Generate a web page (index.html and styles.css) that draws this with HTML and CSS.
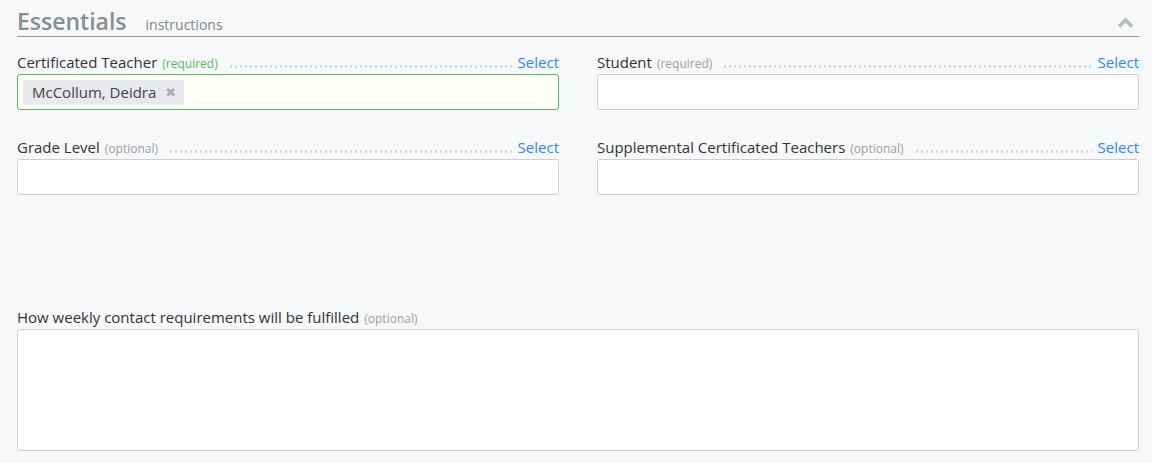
FILE: index.html
```html
<!DOCTYPE html>
<html>
<head>
<meta charset="utf-8">
<link rel="stylesheet" href="styles.css">
</head>
<body>
<section class="panel">
  <header class="panel-head">
    <h2 class="title">Essentials</h2>
    <span class="instructions">instructions</span>
    <svg class="chevron" width="17" height="11" viewBox="0 0 17 11"><path d="M2 9.5 L8.5 3 L15 9.5" fill="none" stroke="#b5bcbf" stroke-width="3.6"/></svg>
  </header>
  <div class="grid">
    <div class="field">
      <div class="label-row">
        <span class="label">Certificated Teacher</span><span class="hint req">(required)</span>
        <span class="leader"></span>
        <a class="select">Select</a>
      </div>
      <div class="box filled">
        <span class="token">McCollum, Deidra<span class="x">✖</span></span>
      </div>
    </div>
    <div class="field">
      <div class="label-row">
        <span class="label">Student</span><span class="hint">(required)</span>
        <span class="leader"></span>
        <a class="select">Select</a>
      </div>
      <div class="box"></div>
    </div>
    <div class="field">
      <div class="label-row">
        <span class="label">Grade Level</span><span class="hint">(optional)</span>
        <span class="leader"></span>
        <a class="select">Select</a>
      </div>
      <div class="box"></div>
    </div>
    <div class="field">
      <div class="label-row">
        <span class="label">Supplemental Certificated Teachers</span><span class="hint">(optional)</span>
        <span class="leader"></span>
        <a class="select">Select</a>
      </div>
      <div class="box"></div>
    </div>
  </div>
  <div class="field wide">
    <div class="label-row">
      <span class="label">How weekly contact requirements will be fulfilled</span><span class="hint">(optional)</span>
    </div>
    <div class="area"></div>
  </div>
</section>
</body>
</html>
```
FILE: styles.css
```css
html, body { margin: 0; padding: 0; background: #f7f8fa; }
body { font-family: "Open Sans", "DejaVu Sans", sans-serif; color: #333; }
.panel { padding: 6px 13px 0 17px; }
.panel-head {
  display: flex; align-items: baseline;
  border-bottom: 1px solid #8d9799;
  height: 31px; box-sizing: border-box;
  position: relative;
}
.title { margin: 0; font-size: 23px; font-weight: 600; color: #858f92; line-height: 30px; }
.instructions { margin-left: 19px; font-size: 14px; color: #7d8689; }
.chevron { position: absolute; right: 5px; top: 11px; }
.grid {
  display: grid; grid-template-columns: 1fr 1fr; column-gap: 38px; row-gap: 26px;
  margin-top: 14px;
}
.label-row { display: flex; align-items: baseline; height: 22px; margin-bottom: 1px; }
.label { font-size: 15px; color: #333; line-height: 22px; }
.hint { font-size: 12px; color: #9aa0a4; margin-left: 5px; }
.hint.req { color: #5cb85c; }
.leader {
  flex: 1; margin: 0 6px 0 12px; height: 3px;
  background-image: linear-gradient(90deg, #d6d9dc 0 2.5px, transparent 2.5px);
  background-size: 5px 3px; background-repeat: repeat-x;
  align-self: center; transform: translateY(4px);
}
.select { font-size: 15px; color: #2f86f6; cursor: pointer; }
.box {
  height: 36px; box-sizing: border-box; margin-top: 0;
  background: #fff; border: 1px solid #ccd0d4; border-radius: 3px;
  display: flex; align-items: center; padding-left: 5px;
}
.box.filled { background: #fffef8; border-color: #5cb85c; }
.token {
  background: #e7e9ec; border-radius: 3px; height: 25px; box-sizing: border-box;
  padding: 0 8px 0 9px; font-size: 15px; color: #444; display: flex; align-items: center;
}
.x { color: #a9aeb3; font-size: 13px; margin-left: 9px; }
.wide { margin-top: 111px; }
.area {
  height: 122px; box-sizing: border-box;
  background: #fff; border: 1px solid #ccd0d4; border-radius: 3px;
}
```
